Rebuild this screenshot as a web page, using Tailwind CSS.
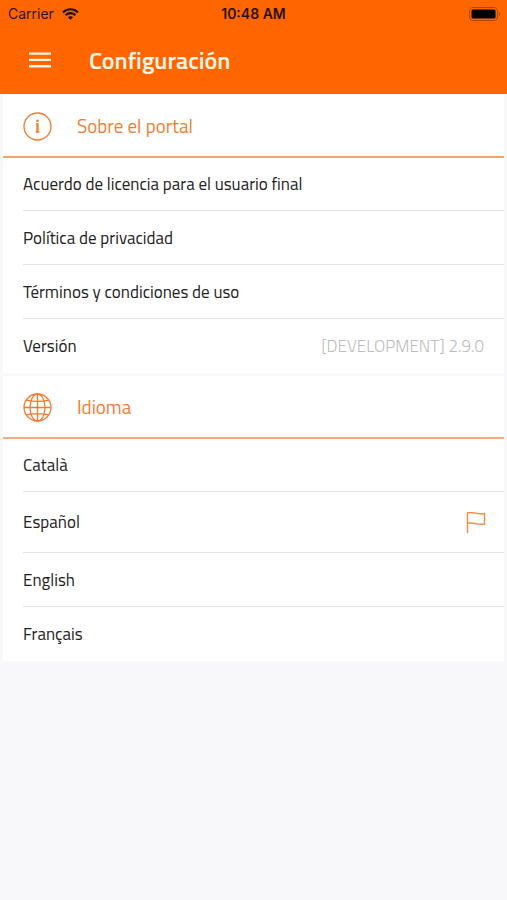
<!DOCTYPE html>
<html lang="es">
<head>
<meta charset="utf-8">
<meta name="viewport" content="width=device-width, initial-scale=1">
<title>Configuración</title>
<script src="https://cdn.jsdelivr.net/npm/@tailwindcss/browser@4"></script>
</head>
<body class="min-h-screen bg-[#f8f8fb] font-['Titillium_Web',Roboto,sans-serif] text-[17px] text-[#222222]">
<header class="bg-[#ff6600]">
  <div class="grid h-7 grid-cols-3 items-center px-2 font-[Inter,sans-serif] text-sm text-[#2b1200]">
    <div class="flex items-center gap-2">
      <span>Carrier</span>
      <svg class="h-3 w-[17px]" viewBox="0 0 17 12" fill="none" stroke="#1a0a00" stroke-width="2.200" aria-hidden="true">
        <path d="M1 4.4C5.2.2 11.800.2 16 4.400"/>
        <path d="M3.600 7.200C6.400 4.500 10.600 4.500 13.400 7.200"/>
        <path d="M8.500 11.800 6 9.300C7.400 8 9.600 8 11 9.300Z" fill="#1a0a00" stroke="none"/>
      </svg>
    </div>
    <span class="text-center font-semibold whitespace-nowrap">10:48 AM</span>
    <svg class="-mr-0.5 h-[14px] w-8 justify-self-end" viewBox="0 0 32 14" aria-hidden="true">
      <rect x=".5" y=".5" width="28" height="13" rx="3.500" fill="none" stroke="#b04700"/>
      <rect x="2.500" y="2.500" width="24" height="9" rx="1.500" fill="#000"/>
      <path d="M30 5C31.600 5.500 31.600 8.500 30 9Z" fill="#b04700"/>
    </svg>
  </div>
  <div class="flex h-[66px] items-center gap-8 pb-0.5 pl-[23px]">
    <button type="button" aria-label="Menú" class="flex h-9 w-[34px] items-center justify-center">
      <svg class="h-4 w-[22px]" viewBox="0 0 22 16" fill="#fff3e4" aria-hidden="true">
        <path d="M0 .500h22v2.300H0zM0 6.800h22v2.300H0zM0 13.100h22v2.300H0z"/>
      </svg>
    </button>
    <h1 class="text-2xl font-semibold text-[#fff6ea]">Configuración</h1>
  </div>
</header>
<main class="flex flex-col gap-[3px] px-[3px] pt-px">
  <section class="bg-white" aria-labelledby="portal">
    <div class="flex h-[63px] items-center gap-[25px] border-b-2 border-[#f9a070] pt-px pl-5">
      <svg class="size-[29px]" viewBox="0 0 29 29" fill="none" stroke="#f47a2c" aria-hidden="true">
        <circle cx="14.500" cy="14.500" r="13.500" stroke-width="1.300"/>
        <path d="M13 12.100H14.500V19.800M12.700 19.900H16.300" stroke-width="1.500"/>
        <path d="M14.500 11.400V20.600" stroke-width="2"/>
        <circle cx="14.500" cy="8.700" r="1.300" fill="#f47a2c" stroke="none"/>
      </svg>
      <h2 id="portal" class="text-[19px] text-[#f47d32]">Sobre el portal</h2>
    </div>
    <ul class="pl-5">
      <li class="flex h-[54px] items-center border-b border-[#e3e3e3] pt-0.5 first:h-[53px]"><a href="#licencia">Acuerdo de licencia para el usuario final</a></li>
      <li class="flex h-[54px] items-center border-b border-[#e3e3e3] pt-0.5"><a href="#privacidad">Política de privacidad</a></li>
      <li class="flex h-[54px] items-center border-b border-[#e3e3e3] pt-0.5"><a href="#terminos">Términos y condiciones de uso</a></li>
      <li class="flex h-[54px] items-center justify-between pt-0.5 pr-5"><span>Versión</span><span class="font-light text-[#bdbdbd]">[DEVELOPMENT] 2.9.0</span></li>
    </ul>
  </section>
  <section class="bg-white" aria-labelledby="idioma">
    <div class="flex h-[63px] items-center gap-[25px] border-b-2 border-[#f9a97c] pt-px pl-5">
      <svg class="size-[29px]" viewBox="0 0 29 29" fill="none" stroke="#f47a2c" stroke-width="1.300" aria-hidden="true">
        <circle cx="14.500" cy="14.500" r="13.500"/>
        <ellipse cx="14.500" cy="14.500" rx="7.500" ry="13.500"/>
        <path d="M14.500 1V28M1 14.500H28M3.500 7.200C10 8.600 19 8.600 25.500 7.200M3.500 21.800C10 20.400 19 20.400 25.500 21.800"/>
      </svg>
      <h2 id="idioma" class="text-[19px] text-[#f47d32]">Idioma</h2>
    </div>
    <ul class="pl-5">
      <li class="h-[53px] border-b border-[#e3e3e3]"><button type="button" class="flex size-full items-center pt-0.5 text-left">Català</button></li>
      <li class="h-[61px] border-b border-[#e3e3e3]">
        <button type="button" class="flex size-full items-center justify-between pt-0.5 pr-[18px] text-left" aria-pressed="true">
          <span>Español</span>
          <svg class="h-[23px] w-5" viewBox="0 0 20 23" fill="none" stroke="#f58a48" stroke-width="1.400" aria-hidden="true">
            <path d="M1.500 21V.900C7-.400 12 2.700 18.500 1.500V12C12 13.200 7 10.200 1.500 11.200"/>
          </svg>
        </button>
      </li>
      <li class="h-[54px] border-b border-[#e3e3e3]"><button type="button" class="flex size-full items-center pt-0.5 text-left">English</button></li>
      <li class="h-[54px]"><button type="button" class="flex size-full items-center pt-0.5 text-left">Français</button></li>
    </ul>
  </section>
</main>
</body>
</html>
